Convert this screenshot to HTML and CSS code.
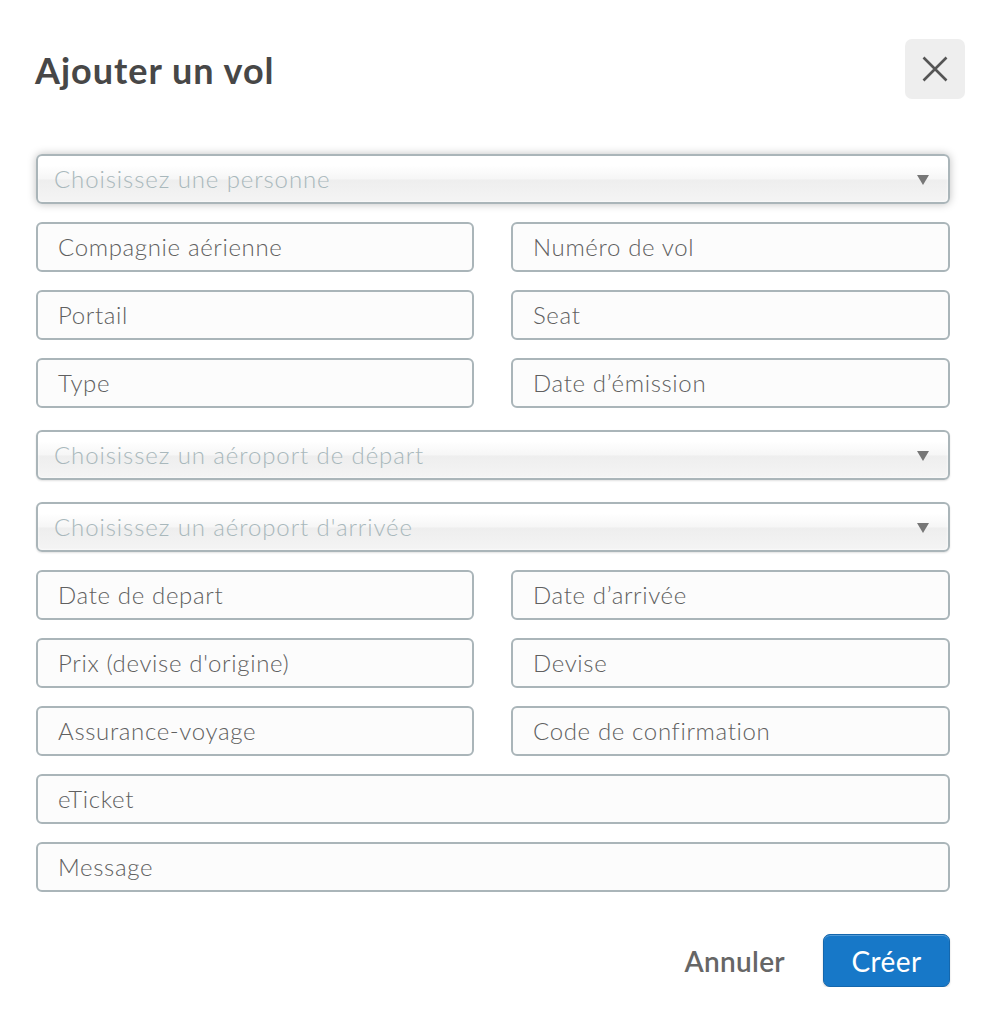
FILE: index.html
```html
<!DOCTYPE html>
<html lang="fr">
<head>
<meta charset="utf-8">
<title>Ajouter un vol</title>
<link rel="stylesheet" href="styles.css">
</head>
<body>
<div class="modal">
  <div class="modal-header">
    <h1 class="title">Ajouter un vol</h1>
    <button class="close" type="button" aria-label="Fermer">
      <svg width="26" height="26" viewBox="0 0 26 26"><path d="M1.5 1.5 L24.5 24.5 M24.5 1.5 L1.5 24.5" stroke="#555" stroke-width="2.6" fill="none"/></svg>
    </button>
  </div>
  <form class="form">
    <div class="select focus"><span>Choisissez une personne</span><i class="caret"></i></div>
    <div class="row">
      <div class="field">Compagnie aérienne</div>
      <div class="field">Numéro de vol</div>
    </div>
    <div class="row">
      <div class="field">Portail</div>
      <div class="field">Seat</div>
    </div>
    <div class="row">
      <div class="field">Type</div>
      <div class="field">Date d’émission</div>
    </div>
    <div class="select spaced"><span>Choisissez un aéroport de départ</span><i class="caret"></i></div>
    <div class="select spaced"><span>Choisissez un aéroport d'arrivée</span><i class="caret"></i></div>
    <div class="row">
      <div class="field">Date de depart</div>
      <div class="field">Date d’arrivée</div>
    </div>
    <div class="row">
      <div class="field">Prix (devise d'origine)</div>
      <div class="field">Devise</div>
    </div>
    <div class="row">
      <div class="field">Assurance-voyage</div>
      <div class="field">Code de confirmation</div>
    </div>
    <div class="field">eTicket</div>
    <div class="field">Message</div>
  </form>
  <div class="footer">
    <button class="cancel" type="button">Annuler</button>
    <button class="create" type="button">Créer</button>
  </div>
</div>
</body>
</html>
```

FILE: styles.css
```css
* { box-sizing: border-box; }
html, body { margin: 0; padding: 0; background: #fff; }
body { font-family: Lato, "Open Sans", Arial, sans-serif; }

.modal {
  width: 987px;
  padding: 39px 37px 0 36px;
}

.modal-header {
  display: flex;
  justify-content: space-between;
  align-items: flex-start;
  height: 115px;
}
.title {
  margin: 9px 0 0 -1px;
  font-size: 36px;
  font-weight: 700;
  letter-spacing: 1px;
  color: #474747;
  line-height: 44px;
}
.close {
  width: 60px;
  height: 60px;
  margin-right: -15px;
  border: 0;
  border-radius: 7px;
  background: #eee;
  display: flex;
  align-items: center;
  justify-content: center;
  padding: 0;
}
.close svg { display: block; }

.form {
  display: flex;
  flex-direction: column;
  gap: 18px;
}
.row {
  display: grid;
  grid-template-columns: 438px 439px;
  column-gap: 37px;
}
.field {
  height: 50px;
  border: 2px solid #aab5b9;
  border-radius: 6px;
  background: #fcfcfc;
  padding: 0 20px;
  font-size: 24px;
  font-weight: 300;
  letter-spacing: 0.65px;
  color: #606060;
  line-height: 46px;
  white-space: nowrap;
}

.select {
  position: relative;
  height: 50px;
  border: 2px solid #aab5b9;
  border-radius: 6px;
  background: linear-gradient(#fff 20%, #f6f6f6 50%, #eee 52%, #f4f4f4 100%);
  box-shadow: 0 0 3px #fff inset, 0 1px 2px rgba(0,0,0,.12);
  padding: 0 16px;
  font-size: 24px;
  font-weight: 300;
  letter-spacing: 0.9px;
  color: #a9b8bc;
  line-height: 46px;
}
.select.focus {
  box-shadow: 0 0 3px #fff inset, 0 0 8px rgba(0,0,0,.25);
}
.select.spaced { margin-top: 4px; }
.caret {
  position: absolute;
  right: 19px;
  top: 19px;
  width: 0;
  height: 0;
  border-left: 6px solid transparent;
  border-right: 6px solid transparent;
  border-top: 10px solid #777;
}

.footer {
  display: flex;
  justify-content: flex-end;
  align-items: center;
  gap: 38px;
  margin-top: 42px;
}
.cancel {
  border: 0;
  background: transparent;
  font-family: inherit;
  font-size: 28px;
  font-weight: 600;
  letter-spacing: 0.3px;
  color: #666;
  padding: 0;
}
.create {
  width: 127px;
  height: 53px;
  border: 1px solid #1467ad;
  border-radius: 7px;
  background: #1778c8;
  box-shadow: inset 0 1px 0 rgba(255,255,255,.25), 0 1px 2px rgba(0,0,0,.2);
  color: #fff;
  font-family: inherit;
  font-size: 28px;
  font-weight: 400;
  letter-spacing: 0.4px;
  padding: 0;
}
```
